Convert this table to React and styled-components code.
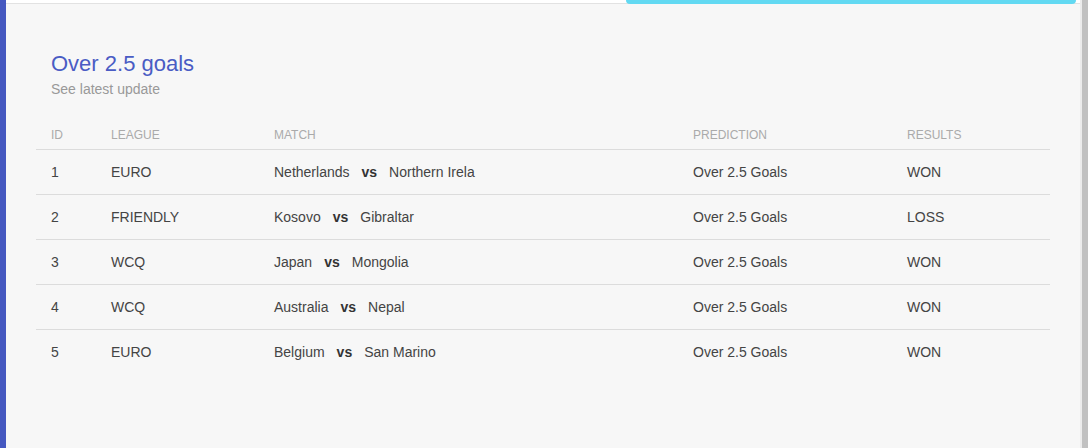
import React from 'react';
import styled, { createGlobalStyle } from 'styled-components';

const GlobalStyle = createGlobalStyle`
  html, body {
    margin: 0;
    padding: 0;
    height: 100%;
    overflow: hidden;
    font-family: "Liberation Sans", Arial, sans-serif;
  }
`;

const rows = [
  { id: 1, league: 'EURO', home: 'Netherlands', away: 'Northern Irela', prediction: 'Over 2.5 Goals', result: 'WON' },
  { id: 2, league: 'FRIENDLY', home: 'Kosovo', away: 'Gibraltar', prediction: 'Over 2.5 Goals', result: 'LOSS' },
  { id: 3, league: 'WCQ', home: 'Japan', away: 'Mongolia', prediction: 'Over 2.5 Goals', result: 'WON' },
  { id: 4, league: 'WCQ', home: 'Australia', away: 'Nepal', prediction: 'Over 2.5 Goals', result: 'WON' },
  { id: 5, league: 'EURO', home: 'Belgium', away: 'San Marino', prediction: 'Over 2.5 Goals', result: 'WON' },
];

const columns = [
  { label: 'ID', width: 60 },
  { label: 'League', width: 163 },
  { label: 'Match', width: 419 },
  { label: 'Prediction', width: 214 },
  { label: 'Results', width: 158 },
];

const Page = styled.div`
  display: flex;
  width: 1088px;
  height: 448px;
  background: #f7f7f7;
`;

const SideBar = styled.div`
  width: 6px;
  background: #4558c0;
`;

const Main = styled.div`
  flex: 1;
  display: flex;
  flex-direction: column;
`;

const TopBar = styled.div`
  height: 3px;
  background: #fff;
  border-bottom: 1px solid #e2e2e2;
  display: flex;
  padding-left: 620px;
`;

const Indicator = styled.div`
  width: 450px;
  height: 4px;
  background: #62d9f2;
  border-radius: 0 0 4px 4px;
`;

const Content = styled.div`
  padding: 47px 30px 0 30px;
`;

const Title = styled.h4`
  margin: 0 0 0 15px;
  font-size: 22px;
  line-height: 26px;
  font-weight: 400;
  color: #4a5cc4;
`;

const Subtitle = styled.p`
  margin: 2px 0 0 15px;
  font-size: 14px;
  line-height: 20px;
  color: #999;
`;

const Table = styled.table`
  margin-top: 13px;
  width: 1014px;
  border-collapse: collapse;
  table-layout: fixed;
`;

const Th = styled.th`
  text-align: left;
  font-weight: 400;
  font-size: 12px;
  line-height: 20px;
  text-transform: uppercase;
  color: #aaa;
  padding: 13px 15px 4px;
`;

const Td = styled.td`
  font-size: 14px;
  line-height: 20px;
  color: #444;
  padding: 12px 15px;
  border-top: 1px solid #dcdcdc;
  white-space: nowrap;
`;

const Vs = styled.b`
  margin: 0 12px;
  font-weight: 700;
  color: #333;
`;

const ScrollBar = styled.div`
  width: 6px;
  border-left: 2px solid #ececec;
  background: #c1c1c1;
`;

export default function App() {
  return (
    <>
      <GlobalStyle />
      <Page>
        <SideBar />
        <Main>
          <TopBar>
            <Indicator />
          </TopBar>
          <Content>
            <Title>Over 2.5 goals</Title>
            <Subtitle>See latest update</Subtitle>
            <Table>
              <colgroup>
                {columns.map((c) => (
                  <col key={c.label} style={{ width: c.width }} />
                ))}
              </colgroup>
              <thead>
                <tr>
                  {columns.map((c) => (
                    <Th key={c.label}>{c.label}</Th>
                  ))}
                </tr>
              </thead>
              <tbody>
                {rows.map((r) => (
                  <tr key={r.id}>
                    <Td>{r.id}</Td>
                    <Td>{r.league}</Td>
                    <Td>
                      {r.home}
                      <Vs>vs</Vs>
                      {r.away}
                    </Td>
                    <Td>{r.prediction}</Td>
                    <Td>{r.result}</Td>
                  </tr>
                ))}
              </tbody>
            </Table>
          </Content>
        </Main>
        <ScrollBar />
      </Page>
    </>
  );
}
